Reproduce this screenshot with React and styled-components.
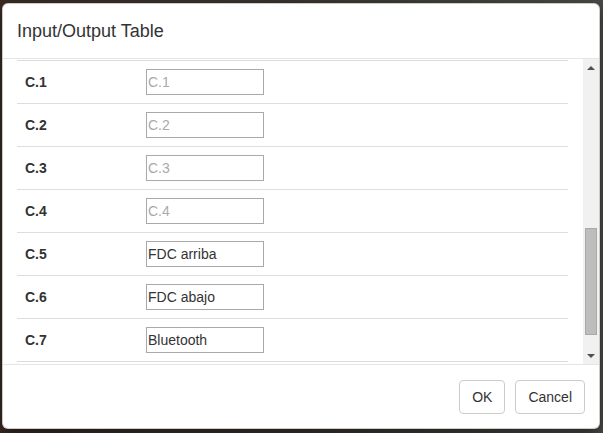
import React, { useLayoutEffect, useRef } from 'react'
import styled, { createGlobalStyle } from 'styled-components';

const Global = createGlobalStyle`
    html, body {
        margin: 0;
        padding: 0;
        background: #3a3531;
        font-family: "Liberation Sans", Arial, sans-serif;
        font-size: 14px;
        color: #333;
    }
`;

const Backdrop = styled.div`
    width: 603px;
    height: 433px;
    padding: 3px 0 0 2px;
    box-sizing: border-box;
    background: linear-gradient(90deg, #3b2a22 0%, #3a3531 50%, #4a4a46 100%);
`;

const Modal = styled.div`
    width: 598px;
    height: 426px;
    box-sizing: border-box;
    display: flex;
    flex-direction: column;
    background: #fff;
    border: 1px solid rgba(0,0,0,.2);
    border-radius: 6px;
    box-shadow: 0 5px 15px rgba(0,0,0,.5);
    overflow: hidden;
`;

const Header = styled.div`
    padding: 15px 14px 14px;
    border-bottom: 1px solid #e5e5e5;
`;

const Title = styled.h4`
    margin: 0;
    font-size: 18px;
    font-weight: 500;
    line-height: 25px;
    color: #333;
`;

const BodyWrap = styled.div`
    flex: 1;
    min-height: 0;
    display: flex;
`;

const Scroller = styled.div`
    flex: 1;
    min-width: 0;
    overflow: hidden;
    padding: 15px 15px 15px 14px;
`;

const Rail = styled.div`
    width: 16px;
    display: flex;
    flex-direction: column;
    background: #f1f1f1;
`;

const RailButton = styled.div`
    height: 17px;
    flex: none;
    display: flex;
    align-items: center;
    justify-content: center;
`;

const Arrow = styled.span`
    width: 0;
    height: 0;
    border-left: 4px solid transparent;
    border-right: 4px solid transparent;
    ${({ $dir }) => $dir === 'up'
        ? 'border-bottom: 4px solid #505050;'
        : 'border-top: 4px solid #505050;'}
`;

const Track = styled.div`
    flex: 1;
    display: flex;
    flex-direction: column;
    align-items: center;
`;

const Thumb = styled.div`
    width: 12px;
    box-sizing: border-box;
    margin-top: ${({ $top }) => $top}px;
    height: ${({ $size }) => $size}px;
    background: #bdbdbd;
    border: 1px solid #a9a9a9;
`;

const Table = styled.table`
    width: 100%;
    border-collapse: collapse;
    border-spacing: 0;
`;

const Cell = styled.td`
    padding: 8px;
    border-top: 1px solid #ddd;
    vertical-align: middle;
    width: ${({ $w }) => $w || 'auto'};
    font-weight: ${({ $bold }) => ($bold ? 700 : 400)};
    font-size: 14px;
    line-height: 20px;
    color: #333;
`;

const Input = styled.input`
    display: block;
    width: 118px;
    height: 26px;
    box-sizing: border-box;
    margin: 0;
    padding: 0 1px;
    border: 1px solid #a9a9a9;
    border-radius: 0;
    font-family: "Liberation Sans", Arial, sans-serif;
    font-size: 14px;
    color: #333;
    background: #fff;
    outline: none;
    &::placeholder {
        color: #aaa;
        opacity: 1;
    }
`;

const Footer = styled.div`
    display: flex;
    justify-content: flex-end;
    gap: 10px;
    padding: 15px 14px 14px;
    border-top: 1px solid #e5e5e5;
`;

const Button = styled.button`
    height: 34px;
    padding: 6px 12px;
    box-sizing: border-box;
    background: #fff;
    border: 1px solid #ccc;
    border-radius: 4px;
    font-family: "Liberation Sans", Arial, sans-serif;
    font-size: 14px;
    line-height: 20px;
    color: #333;
    cursor: pointer;
`;

const rows = [
    { id: 'A.1', value: '' }, { id: 'A.2', value: '' }, { id: 'A.3', value: '' },
    { id: 'A.4', value: '' }, { id: 'A.5', value: '' },
    { id: 'B.1', value: '' }, { id: 'B.2', value: '' }, { id: 'B.3', value: '' },
    { id: 'B.4', value: '' }, { id: 'B.5', value: '' },
    { id: 'C.1', value: '' }, { id: 'C.2', value: '' }, { id: 'C.3', value: '' },
    { id: 'C.4', value: '' }, { id: 'C.5', value: 'FDC arriba' }, { id: 'C.6', value: 'FDC abajo' },
    { id: 'C.7', value: 'Bluetooth' }, { id: 'C.8', value: '' },
];

const App = () => {
    const bodyRef = useRef(null);
    const firstRef = useRef(null);

    // keep the list scrolled so that C.1 sits at the top, as in the dialog
    useLayoutEffect(() => {
        const body = bodyRef.current;
        const row = firstRef.current;
        if (!body || !row) return;
        const off = row.getBoundingClientRect().top - body.getBoundingClientRect().top + body.scrollTop;
        body.scrollTop = off - 2;
    }, []);

    return (
        <>
            <Global />
            <Backdrop>
                <Modal>
                    <Header>
                        <Title>Input/Output Table</Title>
                    </Header>
                    <BodyWrap>
                        <Scroller ref={bodyRef}>
                            <Table>
                                <tbody>
                                    {rows.map((r) => (
                                        <tr key={r.id} ref={r.id === 'C.1' ? firstRef : null}>
                                            <Cell $bold $w="105px">{r.id}</Cell>
                                            <Cell>
                                                <Input defaultValue={r.value} placeholder={r.id} />
                                            </Cell>
                                        </tr>
                                    ))}
                                </tbody>
                            </Table>
                        </Scroller>
                        <Rail>
                            <RailButton><Arrow $dir="up" /></RailButton>
                            <Track>
                                <Thumb $top={152} $size={107} />
                            </Track>
                            <RailButton><Arrow $dir="down" /></RailButton>
                        </Rail>
                    </BodyWrap>
                    <Footer>
                        <Button>OK</Button>
                        <Button>Cancel</Button>
                    </Footer>
                </Modal>
            </Backdrop>
        </>
    )
}

export default App
